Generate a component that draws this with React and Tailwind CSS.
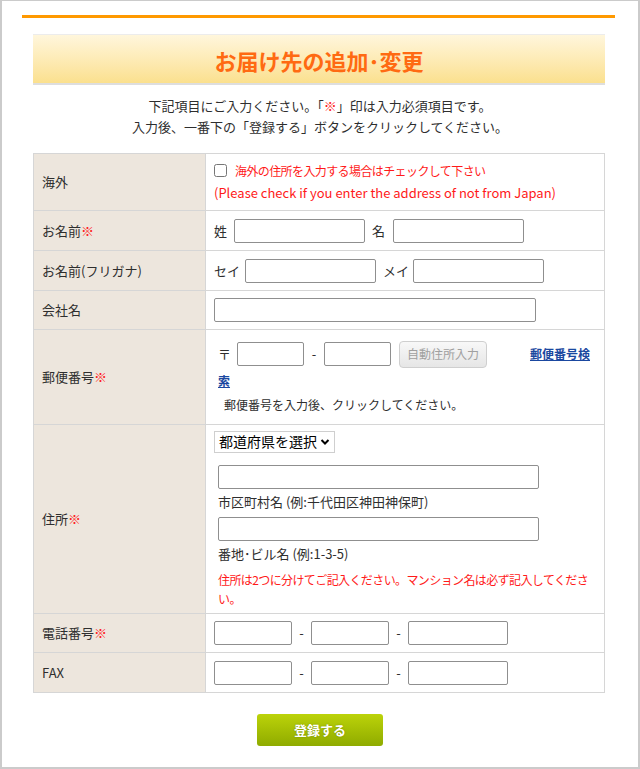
import React from 'react';

const font = "font-['Noto_Sans_CJK_JP','Noto_Sans',sans-serif]";
const inputCls = 'h-[24px] border border-[#8f8f8f] rounded-[2px] bg-white';
const Req = () => <span className="text-[#ff1a1a]">※</span>;

function Row({ label, height, children, last }) {
  return (
    <div className={`flex ${last ? '' : 'border-b border-[#d6d6d6]'}`} style={{ minHeight: height }}>
      <div className="w-[172px] shrink-0 bg-[#ede6dd] border-r border-[#d6d6d6] flex items-center pl-[8px] text-[13px] text-[#2e2e2e]">
        {label}
      </div>
      <div className="flex-1 pl-[8px] flex flex-col justify-center text-[13px] text-[#2e2e2e]">{children}</div>
    </div>
  );
}

function Triple() {
  return (
    <div className="flex items-center">
      <input className={`${inputCls} w-[78px]`} />
      <span className="w-[19px] text-center">-</span>
      <input className={`${inputCls} w-[78px]`} />
      <span className="w-[19px] text-center">-</span>
      <input className={`${inputCls} w-[100px]`} />
    </div>
  );
}

export default function App() {
  return (
    <div className={`w-[640px] h-[769px] bg-white border-t border-l-2 border-r-2 border-b-2 border-[#cbcbcb] ${font}`}>
      <div className="ml-[20px] mr-[23px] mt-[14px] h-[3px] bg-[#ff9900]" />

      <div className="ml-[31px] mr-[33px] mt-[16px] h-[51px] border-t border-[#ececec] border-b-2 border-b-[#dedede] bg-gradient-to-b from-[#fff6dc] to-[#fbe08e] flex items-center justify-center">
        <h1 className="text-[22px] font-bold text-[#ff6a12] mt-[2px]">お届け先の追加･変更</h1>
      </div>

      <div className="mt-[10px] text-center text-[13px] leading-[21px] text-[#2e2e2e]">
        <p>
          下記項目にご入力ください。「<span className="text-[#ff1a1a]">※</span>」印は入力必須項目です。
        </p>
        <p>入力後、一番下の「登録する」ボタンをクリックしてください。</p>
      </div>

      <div className="ml-[31px] w-[572px] mt-[16px] border border-[#d6d6d6]">
        <Row label="海外" height={57}>
          <label className="flex items-center text-[#ff1a1a] text-[12px] tracking-[-0.6px]">
            <input type="checkbox" className="w-[13px] h-[13px] mr-[8px]" />
            海外の住所を入力する場合はチェックして下さい
          </label>
          <div className="text-[#ff1a1a] text-[13px] mt-[3px]">(Please check if you enter the address of not from Japan)</div>
        </Row>

        <Row label={<>お名前<Req /></>} height={40}>
          <div className="flex items-center">
            <span className="mr-[7px]">姓</span>
            <input className={`${inputCls} w-[131px]`} />
            <span className="ml-[7px] mr-[8px]">名</span>
            <input className={`${inputCls} w-[131px]`} />
          </div>
        </Row>

        <Row label="お名前(フリガナ)" height={40}>
          <div className="flex items-center">
            <span className="mr-[5px]">セイ</span>
            <input className={`${inputCls} w-[131px]`} />
            <span className="ml-[7px] mr-[4px]">メイ</span>
            <input className={`${inputCls} w-[131px]`} />
          </div>
        </Row>

        <Row label="会社名" height={39}>
          <input className={`${inputCls} w-[322px]`} />
        </Row>

        <Row label={<>郵便番号<Req /></>} height={95}>
          <div className="pl-[4px] pr-[12px]">
            <div className="flex items-center">
              <span className="mr-[6px]">〒</span>
              <input className={`${inputCls} w-[67px]`} />
              <span className="w-[20px] text-center">-</span>
              <input className={`${inputCls} w-[67px]`} />
              <button className="ml-[8px] h-[27px] w-[88px] rounded-[4px] border border-[#cfcfcf] bg-gradient-to-b from-[#f8f8f8] to-[#e6e6e6] text-[12px] text-[#a0a0a0]">
                自動住所入力
              </button>
              <a className="ml-auto mr-[2px] text-[12px] font-bold text-[#1a48a0] underline">郵便番号検</a>
            </div>
            <a className="block mt-[4px] text-[12px] font-bold text-[#1a48a0] underline">索</a>
            <div className="mt-[6px] pl-[6px] text-[12px]">郵便番号を入力後、クリックしてください。</div>
          </div>
        </Row>

        <Row label={<>住所<Req /></>} height={189}>
          <div className="pr-[12px]">
            <div className="inline-flex items-center h-[22px] border border-[#cfcfcf] px-[4px] text-[14px] text-black">
              都道府県を選択
              <svg width="10" height="8" viewBox="0 0 10 8" className="ml-[3px]"><path d="M1.5 2 5 5.5 8.5 2" stroke="#000" strokeWidth="2" fill="none" /></svg>
            </div>
            <div className="pl-[4px]">
              <input className={`${inputCls} w-[321px] mt-[12px] block`} />
              <div className="mt-[3px]">市区町村名 (例:千代田区神田神保町)</div>
              <input className={`${inputCls} w-[321px] mt-[6px] block`} />
              <div className="mt-[3px]">番地･ビル名 (例:1-3-5)</div>
              <div className="mt-[6px] text-[12px] leading-[19px] tracking-[-0.6px] text-[#ff1a1a]">
                住所は2つに分けてご記入ください。マンション名は必ず記入してください。
              </div>
            </div>
          </div>
        </Row>

        <Row label={<>電話番号<Req /></>} height={39}>
          <Triple />
        </Row>

        <Row label="FAX" height={39} last>
          <Triple />
        </Row>
      </div>

      <div className="flex justify-center mt-[21px]">
        <button className="w-[126px] h-[32px] rounded-[3px] bg-gradient-to-b from-[#bcd30a] to-[#8fab00] text-white text-[13px] font-bold [text-shadow:0_0_2px_rgba(0,0,0,0.25)]">
          登録する
        </button>
      </div>
    </div>
  );
}
